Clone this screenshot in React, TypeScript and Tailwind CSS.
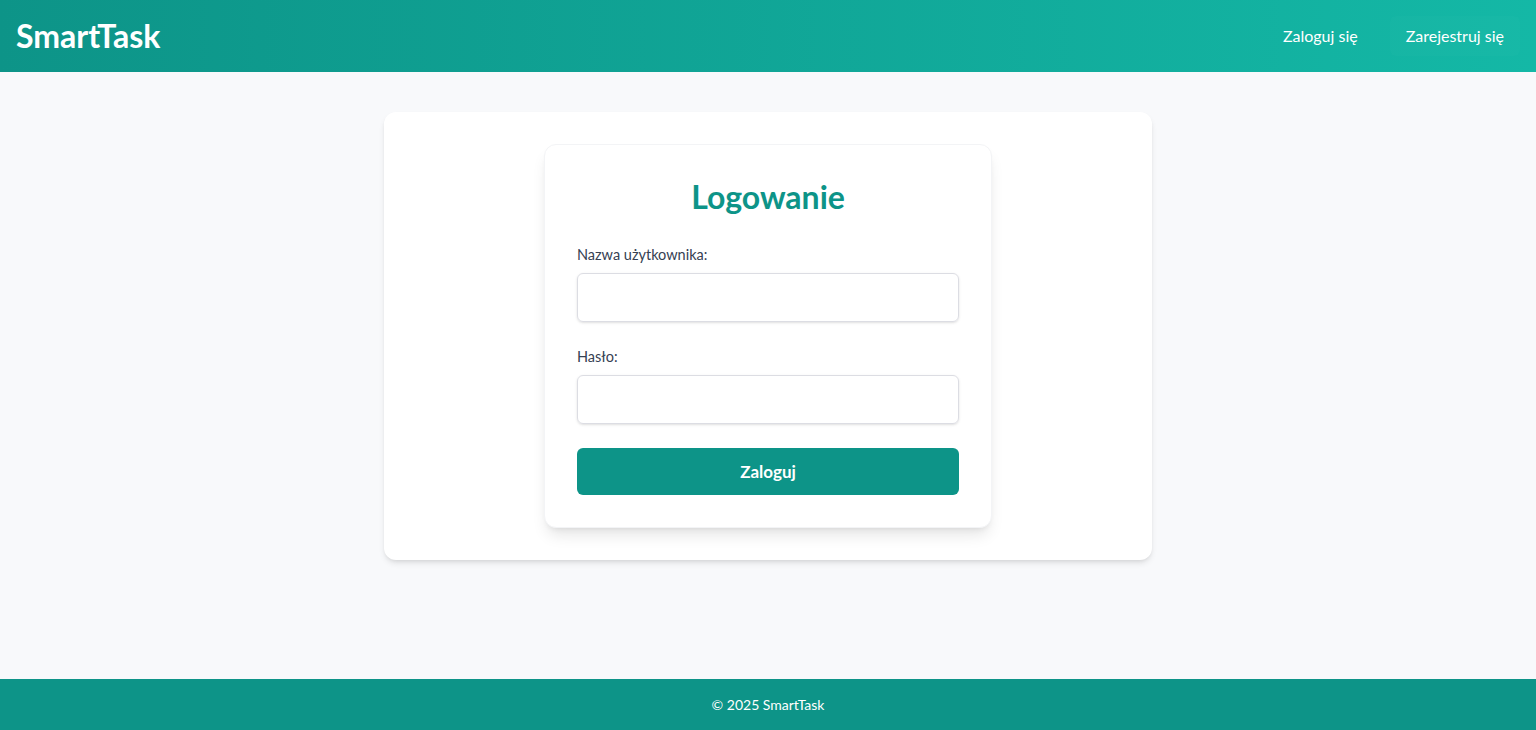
import { useState } from 'react'

const font = { fontFamily: 'Lato, "Noto Sans", sans-serif' }

function Header() {
  return (
    <header className="h-[72px] bg-gradient-to-r from-[#0d9488] to-[#14b8a6] px-4 flex items-center justify-between text-white">
      <span className="text-[32px] font-bold">SmartTask</span>
      <nav className="flex items-center gap-4 text-base">
        <a href="#" className="px-4 py-2 rounded-md">
          Zaloguj się
        </a>
        <a href="#" className="px-4 py-2 rounded-md bg-white/[0.015]">
          Zarejestruj się
        </a>
      </nav>
    </header>
  )
}

function LoginForm() {
  const [username, setUsername] = useState('')
  const [password, setPassword] = useState('')

  return (
    <div className="max-w-[448px] mx-auto bg-white border border-gray-100 rounded-xl shadow-lg p-8">
      <h2 className="text-[32px] leading-[40px] font-bold text-[#0d9488] text-center mb-[26px]">
        Logowanie
      </h2>
      <form onSubmit={(e) => e.preventDefault()}>
        <div className="mb-[23px]">
          <label className="block text-[14.5px] leading-6 text-gray-700 mb-1.5">
            Nazwa użytkownika:
          </label>
          <input
            type="text"
            value={username}
            onChange={(e) => setUsername(e.target.value)}
            className="w-full h-[49px] px-3 border border-[#dcdde3] rounded-md shadow-sm outline-none"
          />
        </div>
        <div className="mb-6">
          <label className="block text-[14.5px] leading-6 text-gray-700 mb-1.5">Hasło:</label>
          <input
            type="password"
            value={password}
            onChange={(e) => setPassword(e.target.value)}
            className="w-full h-[49px] px-3 border border-[#dcdde3] rounded-md shadow-sm outline-none"
          />
        </div>
        <button
          type="submit"
          className="w-full h-[47px] bg-[#0d9488] text-white text-[17px] font-bold rounded-md"
        >
          Zaloguj
        </button>
      </form>
    </div>
  )
}

export default function App() {
  return (
    <div className="min-h-[730px] flex flex-col bg-[#f8f9fb]" style={font}>
      <Header />
      <main className="flex-1 pt-10 px-4">
        <div className="max-w-[768px] mx-auto bg-white rounded-xl shadow-md p-8">
          <LoginForm />
        </div>
      </main>
      <footer className="h-[51px] bg-[#0d9488] text-white text-sm flex items-center justify-center">
        © 2025 SmartTask
      </footer>
    </div>
  )
}
